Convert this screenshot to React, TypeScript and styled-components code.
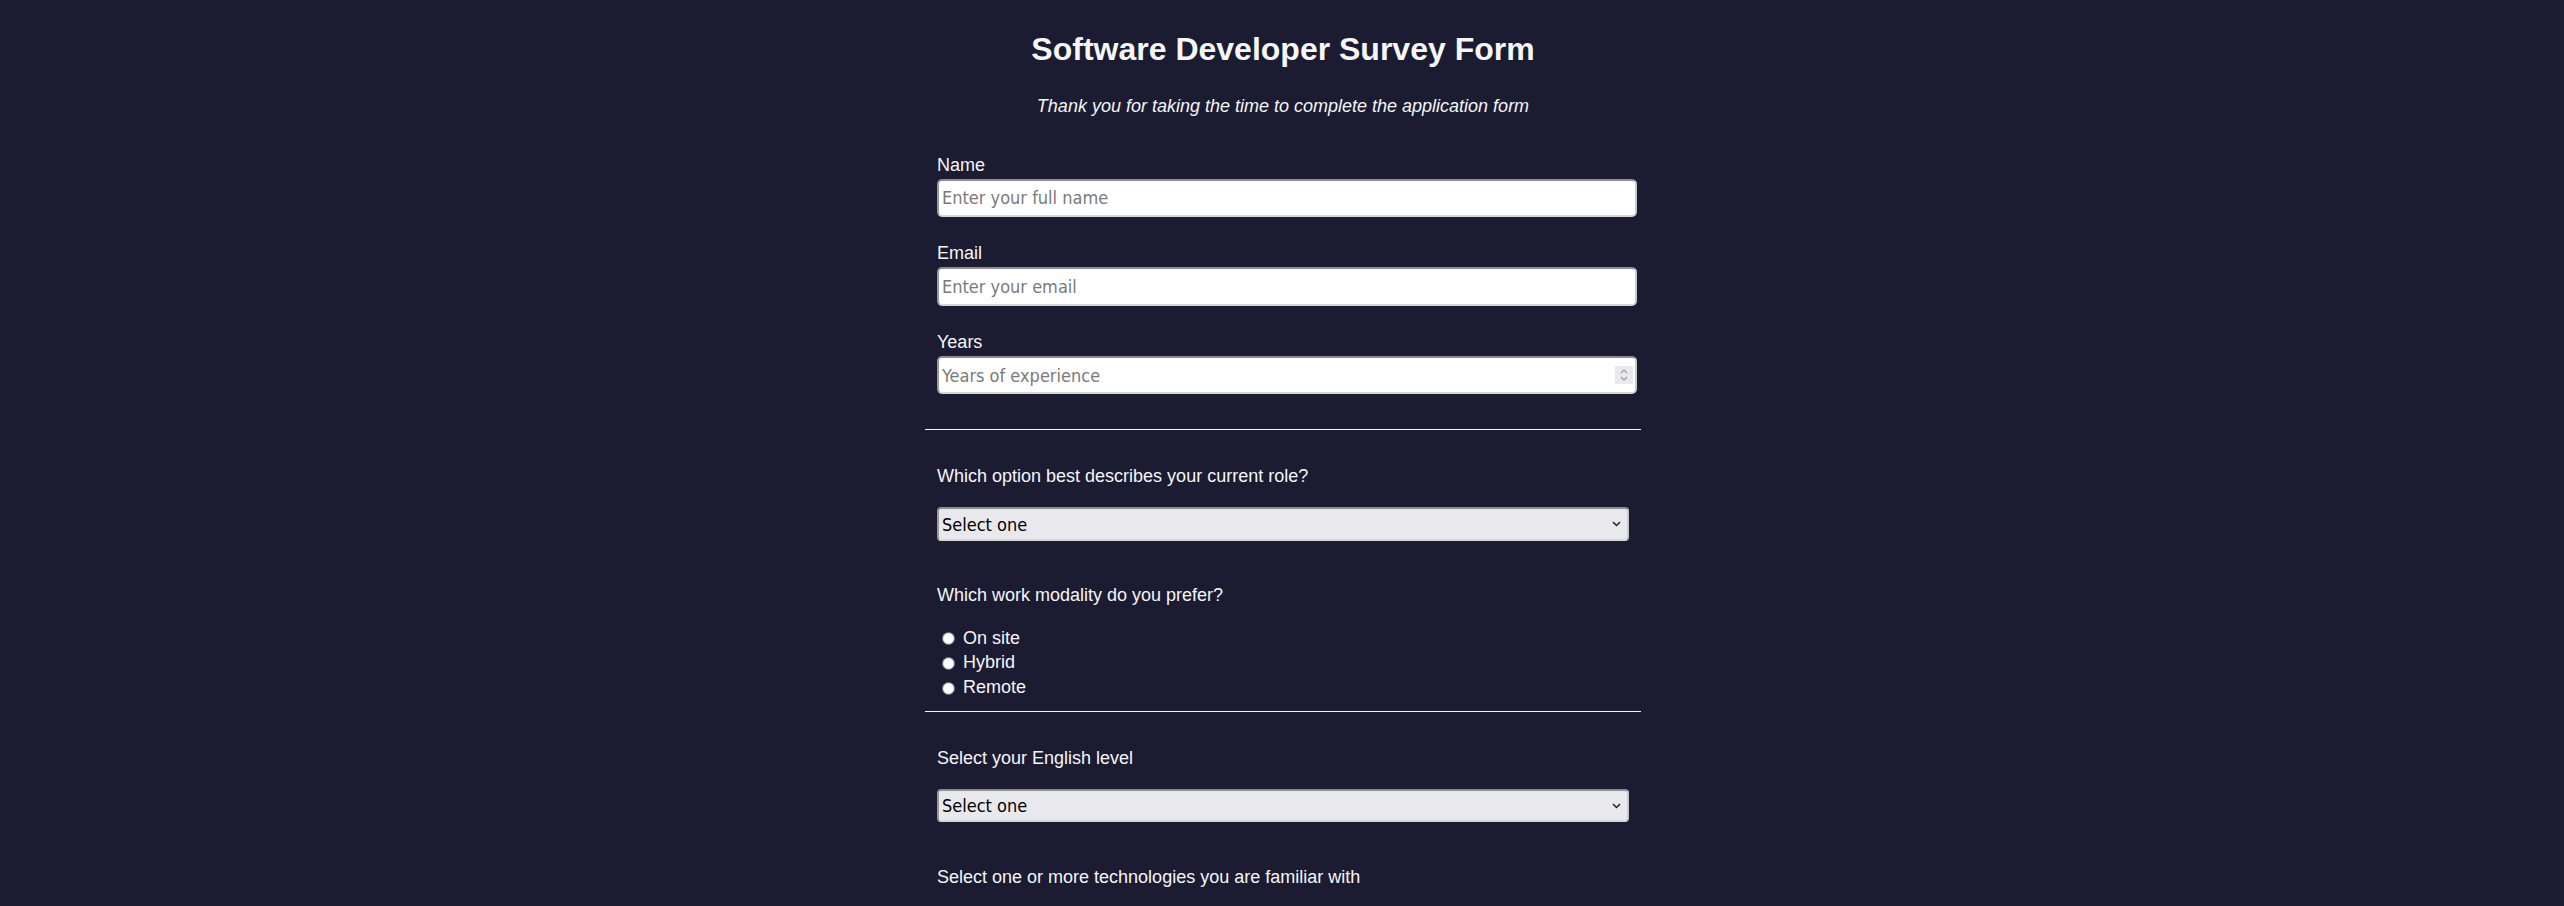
import * as React from 'react'
import styled, { createGlobalStyle } from 'styled-components'

/**
 * Global page styles.
 */
const GlobalStyle = createGlobalStyle`
  html,
  body {
    margin: 0;
    background-color: #1b1b32;
  }

  body {
    color: #f5f6f7;
    font-family: 'Liberation Sans', Arial, sans-serif;
  }
`

const controlFont = `'DejaVu Sans Condensed', 'DejaVu Sans', Tahoma, sans-serif`

/**
 * Page component.
 */
const Page = styled.main`
  align-items: center;
  box-sizing: border-box;
  display: flex;
  flex-direction: column;
  min-height: 906px;
  padding: 31px 0 0 2px;
`

/**
 * Title component.
 */
const Title = styled.h1`
  font-size: 32px;
  font-weight: bold;
  line-height: 37px;
  margin: 0;
  text-align: center;
`

/**
 * Description component.
 */
const Description = styled.p`
  font-size: 18px;
  font-style: italic;
  line-height: 21px;
  margin: 28px 0 0 0;
  text-align: center;
`

/**
 * Form component.
 */
const Form = styled.form`
  display: flex;
  flex-direction: column;
  margin-top: 37.5px;
  width: 716px;
`

/**
 * Section component, groups of questions between dividers.
 */
const Section = styled.div<{ gap: number }>`
  display: flex;
  flex-direction: column;
  gap: ${(p) => p.gap}px;
  padding-left: 12px;
`

/**
 * Field component.
 */
const Field = styled.div`
  display: flex;
  flex-direction: column;
  gap: 3px;
`

/**
 * Label component.
 */
const Label = styled.label`
  display: block;
  font-size: 18px;
  line-height: 21px;
`

/**
 * Question component.
 */
const Question = styled(Label)<{ above?: number; space: number }>`
  margin: ${(p) => p.above ?? 0}px 0 ${(p) => p.space}px 0;
`

/**
 * Divider component.
 */
const Divider = styled.hr<{ above: number }>`
  border: none;
  border-top: 1px solid #f5f6f7;
  margin: ${(p) => p.above}px 0 36px 0;
  width: 100%;
`

/**
 * Input wrapper, so a spinner can sit over the number input.
 */
const InputWrap = styled.div`
  position: relative;
  width: 700px;
`

/**
 * TextInput component.
 */
const TextInput = styled.input`
  -moz-appearance: textfield;
  background: #ffffff;
  border: 2px solid;
  border-color: #8e8e8e #c9c9c9 #d6d6d6 #9a9a9a;
  border-radius: 5px;
  box-sizing: border-box;
  color: #000000;
  display: block;
  font-family: ${controlFont};
  font-size: 18px;
  height: 38.5px;
  outline: none;
  padding: 0 3px;
  width: 100%;

  &::placeholder {
    color: #7a7a7a;
  }

  &::-webkit-inner-spin-button,
  &::-webkit-outer-spin-button {
    -webkit-appearance: none;
    display: none;
    margin: 0;
  }
`

/**
 * Spinner component drawn over the number input.
 */
const Spinner = styled.span`
  align-items: center;
  background: #e9e9ed;
  display: flex;
  flex-direction: column;
  height: 18px;
  justify-content: center;
  position: absolute;
  right: 4px;
  top: 10px;
  width: 18px;
`

/**
 * Select wrapper, holds the chevron.
 */
const SelectWrap = styled.div`
  position: relative;
  width: 692px;
`

/**
 * Select component.
 */
const Select = styled.select`
  -webkit-appearance: none;
  appearance: none;
  background: #e9e9ed;
  border: 2px solid;
  border-color: #8e8e8e #c9c9c9 #d6d6d6 #9a9a9a;
  border-radius: 4px;
  box-sizing: border-box;
  color: #000000;
  display: block;
  font-family: ${controlFont};
  font-size: 18px;
  height: 33.5px;
  outline: none;
  padding: 0 24px 0 3px;
  width: 100%;
`

/**
 * Chevron component drawn over the select.
 */
const Chevron = styled.svg`
  pointer-events: none;
  position: absolute;
  right: 8px;
  top: 14px;
`

/**
 * RadioList component.
 */
const RadioList = styled.div`
  display: flex;
  flex-direction: column;
`

/**
 * RadioRow component.
 */
const RadioRow = styled.label`
  align-items: center;
  display: flex;
  font-size: 18px;
  height: 24.7px;
  line-height: 21px;
`

/**
 * Radio component.
 */
const Radio = styled.input`
  -webkit-appearance: none;
  appearance: none;
  background: radial-gradient(circle, #ffffff 55%, #e2e2e6 70%);
  border: 1.5px solid #7c7c84;
  border-radius: 50%;
  box-sizing: border-box;
  height: 13px;
  margin: 1px 8px 0 5px;
  width: 13px;
`

const roles = ['Student', 'Full-time job', 'Full-time learner', 'Prefer not to say', 'Other']
const levels = ['Basic', 'Intermediate', 'Advanced', 'Native']
const modalities = ['On site', 'Hybrid', 'Remote']

/**
 * DropDown Component.
 */
const DropDown = ({ id, options }: { id: string; options: string[] }) => (
  <SelectWrap>
    <Select id={id} defaultValue="">
      <option value="" disabled>
        Select one
      </option>
      {options.map((o) => (
        <option key={o}>{o}</option>
      ))}
    </Select>
    <Chevron width="9" height="6" viewBox="0 0 9 6">
      <path d="M1 1 L4.5 4.5 L8 1" fill="none" stroke="#202020" strokeWidth="1.5" />
    </Chevron>
  </SelectWrap>
)

/**
 * App Component.
 */
export default function App() {
  return (
    <>
      <GlobalStyle />
      <Page>
        <Title id="title">Software Developer Survey Form</Title>
        <Description id="description">Thank you for taking the time to complete the application form</Description>
        <Form id="survey-form">
          <Section gap={26.2}>
            <Field>
              <Label htmlFor="name" id="name-label">
                Name
              </Label>
              <InputWrap>
                <TextInput id="name" type="text" placeholder="Enter your full name" />
              </InputWrap>
            </Field>
            <Field>
              <Label htmlFor="email" id="email-label">
                Email
              </Label>
              <InputWrap>
                <TextInput id="email" type="email" placeholder="Enter your email" />
              </InputWrap>
            </Field>
            <Field>
              <Label htmlFor="number" id="number-label">
                Years
              </Label>
              <InputWrap>
                <TextInput id="number" type="number" min={0} max={60} placeholder="Years of experience" />
                <Spinner>
                  <svg width="10" height="14" viewBox="0 0 10 14">
                    <path d="M2 5 L5 2 L8 5 M2 9 L5 12 L8 9" fill="none" stroke="#9a9aa3" strokeWidth="1.1" />
                  </svg>
                </Spinner>
              </InputWrap>
            </Field>
          </Section>

          <Divider above={35} />

          <Section gap={0}>
            <Question htmlFor="dropdown" space={20}>
              Which option best describes your current role?
            </Question>
            <DropDown id="dropdown" options={roles} />
            <Question as="p" above={44} space={20}>
              Which work modality do you prefer?
            </Question>
            <RadioList>
              {modalities.map((m) => (
                <RadioRow key={m}>
                  <Radio type="radio" name="modality" value={m} />
                  {m}
                </RadioRow>
              ))}
            </RadioList>
          </Section>

          <Divider above={11.5} />

          <Section gap={0}>
            <Question htmlFor="english" space={19.5}>
              Select your English level
            </Question>
            <DropDown id="english" options={levels} />
            <Question as="p" above={45} space={0}>
              Select one or more technologies you are familiar with
            </Question>
          </Section>
        </Form>
      </Page>
    </>
  )
}
